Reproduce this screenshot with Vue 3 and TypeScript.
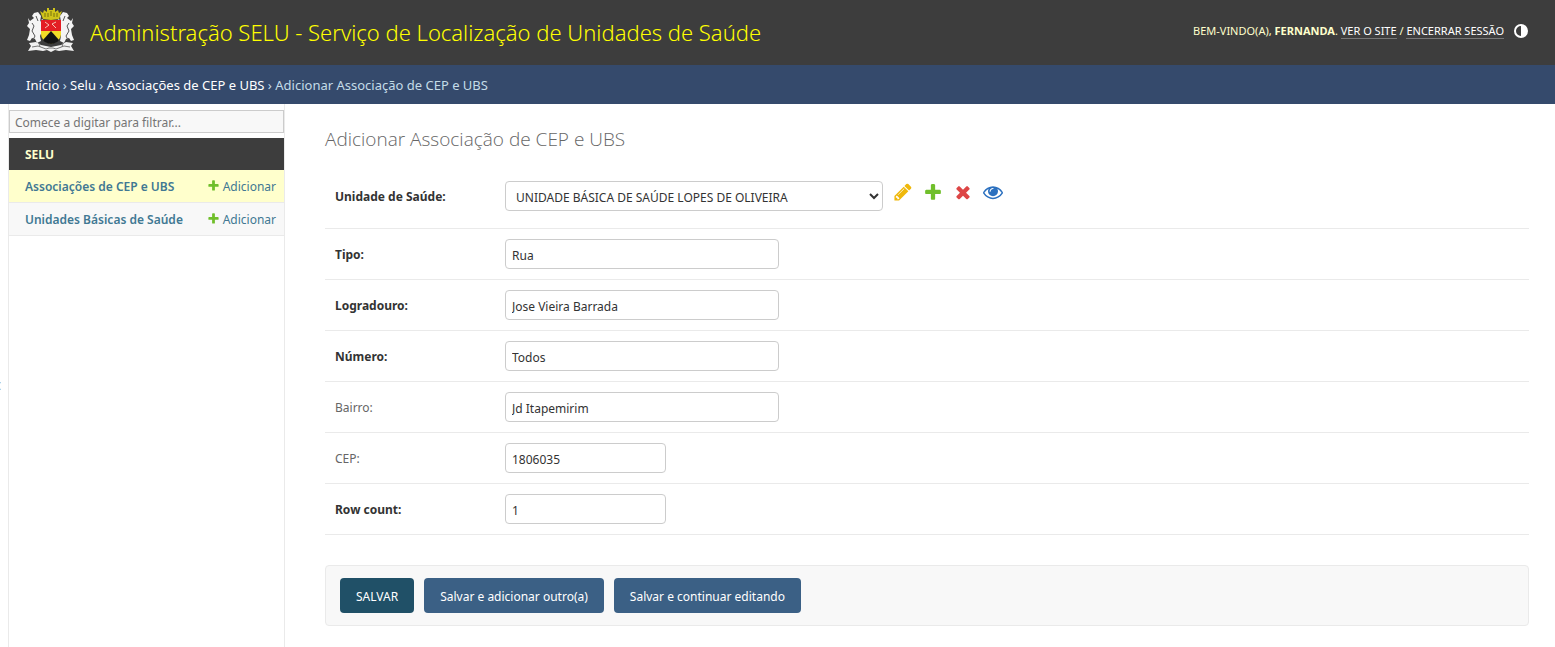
<script setup lang="ts">
import { ref } from 'vue'

interface Field {
  id: string
  label: string
  required: boolean
  short: boolean
  value: string
}

const icons = {
  change: 'M491 1536l91-91-235-235-91 91v107h128v128h107zm523-928q0-22-22-22-10 0-17 7l-542 542q-7 7-7 17 0 22 22 22 10 0 17-7l542-542q7-7 7-17zm-54-192l416 416-832 832h-416v-416zm683 96q0 53-37 90l-166 166-416-416 166-165q36-38 90-38 53 0 91 38l235 234q37 39 37 91z',
  add: 'M1600 796v192q0 40-28 68t-68 28h-416v416q0 40-28 68t-68 28h-192q-40 0-68-28t-28-68v-416h-416q-40 0-68-28t-28-68v-192q0-40 28-68t68-28h416v-416q0-40 28-68t68-28h192q40 0 68 28t28 68v416h416q40 0 68 28t28 68z',
  remove: 'M1490 1322q0 40-28 68l-136 136q-28 28-68 28t-68-28l-294-294-294 294q-28 28-68 28t-68-28l-136-136q-28-28-28-68t28-68l294-294-294-294q-28-28-28-68t28-68l136-136q28-28 68-28t68 28l294 294 294-294q28-28 68-28t68 28l136 136q28 28 28 68t-28 68l-294 294 294 294q28 28 28 68z',
  view: 'M1664 960q-152-236-381-353 61 104 61 225 0 185-131.5 316.5t-316.5 131.5-316.5-131.5-131.5-316.5q0-121 61-225-229 117-381 353 133 205 333.5 326.5t434.5 121.5 434.5-121.5 333.5-326.5zm-720-384q0-20-14-34t-34-14q-125 0-214.5 89.5t-89.5 214.5q0 20 14 34t34 14 34-14 14-34q0-86 61-147t147-61q20 0 34-14t14-34zm848 384q0 34-20 69-140 230-376.5 368.5t-499.5 138.5-499.5-139-376.5-368q-20-35-20-69t20-69q140-229 376.5-368t499.5-139 499.5 139 376.5 368q20 35 20 69z',
}

const relatedActions = [
  { name: 'change', label: 'Modificar', path: icons.change },
  { name: 'add', label: 'Adicionar outro', path: icons.add },
  { name: 'remove', label: 'Remover', path: icons.remove },
  { name: 'view', label: 'Visualizar', path: icons.view },
]

const models = [
  { name: 'Associações de CEP e UBS', current: true },
  { name: 'Unidades Básicas de Saúde', current: false },
]

const filter = ref('')
const unit = ref('UNIDADE BÁSICA DE SAÚDE LOPES DE OLIVEIRA')
const fields = ref<Field[]>([
  { id: 'tipo', label: 'Tipo:', required: true, short: false, value: 'Rua' },
  { id: 'logradouro', label: 'Logradouro:', required: true, short: false, value: 'Jose Vieira Barrada' },
  { id: 'numero', label: 'Número:', required: true, short: false, value: 'Todos' },
  { id: 'bairro', label: 'Bairro:', required: false, short: false, value: 'Jd Itapemirim' },
  { id: 'cep', label: 'CEP:', required: false, short: true, value: '1806035' },
  { id: 'row-count', label: 'Row count:', required: true, short: true, value: '1' },
])
</script>

<template>
  <div class="page">
    <header class="header">
      <div class="branding">
        <svg class="crest" viewBox="0 0 60 56" aria-hidden="true">
          <path d="M20 9l3 2 1-3 3 2V6h2v2h4V6h2v4l3-2 1 3 3-2-3 8-8 1-8-1z" fill="#cfc31a" />
          <path d="M25 11v4M28 11v4M31 9v5M34 11v4M37 11v4" stroke="#77700d" stroke-width="1" />
          <path d="M18 10l-4 1-2 3 2 2-4 3-2-3 1 5-2 3 3 3-1 6-2 5 3 1 2-3 3 1 2 4 4-2-1-5 3-7-1-5 3-3-3-2-2 3 1-6z" fill="#f4f4f4" />
          <path d="M43 10l4 1 2 3-2 2 4 3 2-3-1 5 2 3-3 3 1 6 2 5-3 1-2-3-3 1-2 4-4-2 1-5-3-7 1-5-3-3 3-2 2 3-1-6z" fill="#f4f4f4" />
          <path d="M12 21l2 3-2 5 3 5-2 4M49 21l-2 3 2 5-3 5 2 4M16 14l2 5M45 14l-2 5" fill="none" stroke="#555" stroke-width="1" />
          <path d="M21 18h20v14q0 7-10 10-10-3-10-10z" fill="#f3dc28" />
          <path d="M21 18h20v11H21z" fill="#e31e24" />
          <path d="M23 38l8-9 8 9q-2 3-8 4-6-1-8-4z" fill="#141414" />
          <path d="M25 20l4 3-4 3M36 20l-4 2 4 4" fill="none" stroke="#f5c5b5" stroke-width="1" />
          <path d="M9 41l7-1 5 3 10 2 10-2 5-3 7 1-2 3 3 5-8-1-7 1-4-1-4 2-4-2-4 1-7-1-8 1 3-5z" fill="#f1f1f1" />
          <path d="M12 45l6-1 8 3 3-1h4l3 1 8-3 6 1M19 41l1 4M43 41l-1 4" fill="none" stroke="#777" stroke-width="1" />
        </svg>
        <h1><a href="#">Administração SELU - Serviço de Localização de Unidades de Saúde</a></h1>
      </div>
      <div class="user-tools">
        <span>Bem-vindo(a), <strong>Fernanda</strong>. <a href="#site">Ver o site</a> / <a href="#sair">Encerrar sessão</a></span>
        <button class="theme" type="button" aria-label="Alternar tema">
          <svg viewBox="0 0 16 16"><circle cx="8" cy="8" r="6" fill="none" stroke="#fff" stroke-width="2" /><path d="M8 2a6 6 0 0 1 0 12z" fill="#fff" /></svg>
        </button>
      </div>
    </header>

    <nav class="breadcrumbs" aria-label="Trilha">
      <a href="#inicio">Início</a> › <a href="#selu">Selu</a> › <a href="#assoc">Associações de CEP e UBS</a> › Adicionar Associação de CEP e UBS
    </nav>

    <div class="main">
      <button class="toggle" type="button" aria-label="Alternar barra lateral">
        <svg viewBox="0 0 8 12"><path d="M7 2L3 6l4 4" fill="none" stroke="#2f8fca" stroke-width="2" /></svg>
      </button>
      <nav class="sidebar" aria-label="Modelos">
        <input v-model="filter" class="filter" type="search" placeholder="Comece a digitar para filtrar..." aria-label="Filtrar itens de navegação">
        <table>
          <caption><a href="#selu">Selu</a></caption>
          <tbody>
            <tr v-for="m in models" :key="m.name" :class="{ current: m.current }">
              <th scope="row"><a href="#modelo">{{ m.name }}</a></th>
              <td>
                <a class="add" href="#adicionar"><svg viewBox="0 0 1792 1792" aria-hidden="true"><path :d="icons.add" /></svg>Adicionar</a>
              </td>
            </tr>
          </tbody>
        </table>
      </nav>

      <main class="content">
        <h2>Adicionar Associação de CEP e UBS</h2>
        <form @submit.prevent>
          <div class="row related">
            <label class="required" for="unidade">Unidade de Saúde:</label>
            <select id="unidade" v-model="unit">
              <option>UNIDADE BÁSICA DE SAÚDE LOPES DE OLIVEIRA</option>
            </select>
            <div class="actions">
              <a v-for="a in relatedActions" :key="a.name" href="#unidade" :class="a.name" :aria-label="a.label">
                <svg viewBox="0 0 1792 1792"><path :d="a.path" /></svg>
              </a>
            </div>
          </div>
          <div v-for="f in fields" :key="f.id" class="row">
            <label :for="f.id" :class="{ required: f.required }">{{ f.label }}</label>
            <input :id="f.id" v-model="f.value" type="text" :class="{ short: f.short }">
          </div>
          <div class="submit-row">
            <button class="default" type="submit">SALVAR</button>
            <button type="submit">Salvar e adicionar outro(a)</button>
            <button type="submit">Salvar e continuar editando</button>
          </div>
        </form>
      </main>
    </div>
  </div>
</template>

<style>
body {
  background: #fff;
}
</style>

<style scoped>
.page {
  display: flex;
  flex-direction: column;
  min-height: 100vh;
  font-family: "Noto Sans", "Open Sans", sans-serif;
  font-size: 13px;
  color: #333;
}
.page *,
.page {
  box-sizing: border-box;
}
a {
  text-decoration: none;
}
button,
input,
select {
  font-family: inherit;
}
.header {
  display: flex;
  align-items: center;
  justify-content: space-between;
  height: 65px;
  padding: 0 26px 0 20px;
  background: #3d3d3d;
  color: #ffc;
}
.branding {
  display: flex;
  align-items: center;
  gap: 10px;
}
.crest {
  width: 60px;
  height: 56px;
  margin-bottom: 5px;
}
h1 {
  margin: 0 0 2px;
  font-size: 22px;
  font-weight: 300;
  line-height: 32px;
}
h1 a {
  color: #ff0;
}
.user-tools {
  display: flex;
  align-items: center;
  gap: 9px;
  margin-bottom: 4px;
  font-size: 11px;
  line-height: 14px;
  text-transform: uppercase;
}
.user-tools a {
  color: #fff;
  border-bottom: 1px solid #777;
}
.theme {
  width: 16px;
  height: 16px;
  padding: 0;
  border: 0;
  background: transparent;
}
.theme svg {
  display: block;
}
.breadcrumbs {
  height: 39px;
  padding: 0 26px;
  background: #354a6c;
  color: #c4dce8;
  line-height: 40px;
}
.breadcrumbs a {
  color: #fff;
}
.main {
  display: flex;
  flex: 1;
}
.toggle {
  display: flex;
  flex: 0 0 9px;
  align-items: center;
  justify-content: flex-end;
  width: 9px;
  padding: 21px 7px 0 0;
  overflow: hidden;
  border: 0;
  border-right: 1px solid #eaeaea;
  background: #fff;
}
.toggle svg {
  flex: none;
  width: 8px;
  height: 12px;
}
.sidebar {
  flex: 0 0 276px;
  padding-top: 6px;
  border-right: 1px solid #eaeaea;
}
.filter {
  display: block;
  width: 100%;
  height: 23px;
  padding: 2px 5px 0;
  border: 1px solid #ccc;
  border-radius: 0;
  background: #f8f8f8;
  font-size: 12px;
}
.filter::placeholder {
  color: #757575;
}
table {
  width: 100%;
  margin-top: 5px;
  border-collapse: separate;
  border-spacing: 0;
  font-size: 12px;
  line-height: 16px;
}
caption {
  padding: 9px 16px 7px;
  background: #3d3d3d;
  font-size: 12px;
  font-weight: 700;
  text-align: left;
  text-transform: uppercase;
}
caption a {
  color: #ffc;
}
th,
td {
  height: 33px;
  padding: 2px 0 0;
  border-bottom: 1px solid #eaeaea;
  background: #f8f8f8;
  white-space: nowrap;
}
.current th,
.current td {
  background: #ffc;
}
th {
  padding-left: 16px;
  font-weight: 600;
  text-align: left;
}
td {
  padding-right: 8px;
  text-align: right;
}
th a,
td a {
  color: #417893;
}
.add {
  display: inline-flex;
  gap: 3px;
}
.add svg {
  width: 13px;
  height: 13px;
  fill: #70bf2b;
}
.content {
  flex: 1;
  min-width: 0;
  padding: 20px 26px 21px 40px;
}
h2 {
  margin: 0 0 17px;
  color: #666;
  font-family: "Open Sans", "Noto Sans", sans-serif;
  font-size: 19px;
  font-weight: 300;
  line-height: 30px;
}
.row {
  display: flex;
  align-items: flex-start;
  padding: 10px;
  border-bottom: 1px solid #eaeaea;
}
.related {
  padding-bottom: 17px;
}
label {
  flex: 0 0 170px;
  padding-top: 1px;
  color: #666;
  font-size: 12px;
  line-height: 29px;
}
label.required {
  color: #333;
  font-weight: 700;
}
.row input,
select {
  height: 30px;
  border: 1px solid #ccc;
  border-radius: 4px;
  background: #fff;
  color: #333;
  font-size: 12px;
}
.row input {
  width: 274px;
  padding: 2px 6px 0;
}
.row input.short {
  width: 161px;
}
select {
  width: 378px;
  padding: 2px 6px 0;
}
.actions {
  display: flex;
  gap: 10px;
  margin: 1px 0 0 10px;
}
.actions svg {
  display: block;
  width: 20px;
  height: 20px;
}
.change {
  fill: #efb80b;
}
.add {
  fill: #70bf2b;
}
.remove {
  fill: #dd4646;
}
.view {
  fill: #2b70bf;
}
.submit-row {
  display: flex;
  flex-wrap: wrap;
  gap: 10px;
  margin-top: 30px;
  padding: 12px 14px;
  border: 1px solid #eaeaea;
  border-radius: 4px;
  background: #f8f8f8;
}
.submit-row button {
  height: 35px;
  padding: 2px 16px 0;
  border: 0;
  border-radius: 4px;
  background: #3b6085;
  color: #fff;
  font-size: 12px;
}
.submit-row .default {
  background: #205067;
}
</style>
